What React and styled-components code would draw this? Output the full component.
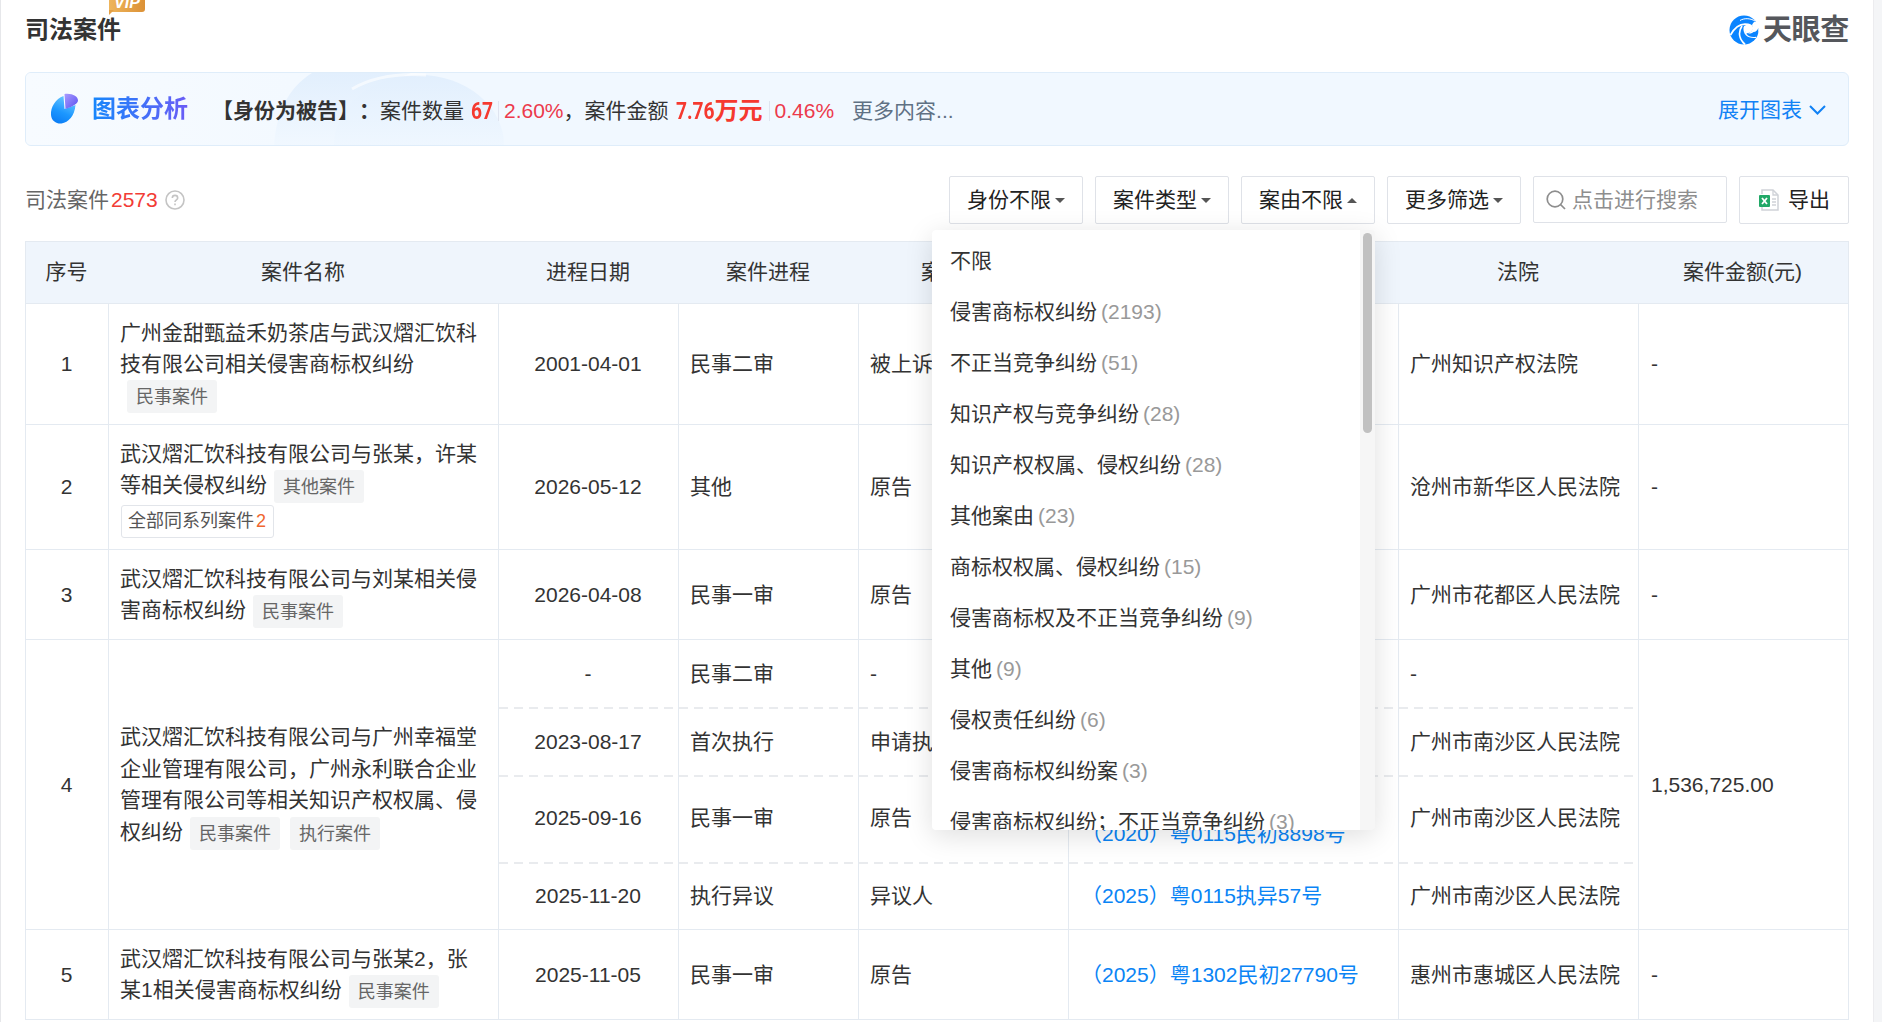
import React from 'react';
import styled, { createGlobalStyle } from 'styled-components';

const GlobalStyle = createGlobalStyle`
  * {
    box-sizing: border-box;
  }
  body {
    margin: 0;
    overflow: hidden;
    background: #f4f5f7;
    color: #333;
    font-family: "Liberation Sans", "Noto Sans CJK SC", sans-serif;
    font-size: 21px;
    line-height: 1.5;
    text-spacing-trim: space-all;
  }
`;

const Page = styled.main`
  width: 1874px;
  height: 1022px;
  overflow: hidden;
  padding: 0 24px;
  background: #fff;
  border-left: 1px solid #e6e7ea;
  border-right: 1px solid #ececef;
`;

const Header = styled.header`
  display: flex;
  justify-content: space-between;
  height: 72px;
`;

const Title = styled.h2`
  position: relative;
  margin: 12px 0 0;
  font-size: 24px;
  line-height: 36px;
  font-weight: bold;
`;

const VipBadge = styled.span`
  position: absolute;
  left: 84px;
  top: -17px;
  width: 36px;
  height: 17px;
  border-radius: 3px 3px 3px 0;
  background: linear-gradient(90deg, #eeb55c, #dc9136);
  color: #fff;
  font-size: 16px;
  line-height: 16px;
  font-style: italic;
  font-weight: bold;
  text-align: center;

  &::after {
    content: '';
    position: absolute;
    left: 0;
    top: 15px;
    border-top: 5px solid #e3a046;
    border-right: 5px solid transparent;
  }
`;

const Logo = styled.div`
  display: flex;
  align-items: center;
  gap: 4px;
  height: 59px;
  color: #55575c;
  font-size: 29px;
  line-height: 36px;
  letter-spacing: -0.3px;
  font-weight: bold;
`;

const Banner = styled.section`
  position: relative;
  display: flex;
  align-items: center;
  height: 74px;
  padding: 0 22px 0 24px;
  border: 1px solid #dfedfa;
  border-radius: 6px;
  background: #f1f8ff;
  overflow: hidden;
`;

const BannerArt = styled.svg`
  position: absolute;
  left: 0;
  top: 0;
`;

const BannerName = styled.strong`
  position: relative;
  width: 96px;
  margin: 0 24px 0 13px;
  font-size: 24px;
  line-height: 36px;
  background: linear-gradient(90deg, #1687fb, #6a5cf6);
  background-clip: text;
  color: transparent;
`;

const Summary = styled.div`
  position: relative;
  display: flex;
  align-items: center;
  flex: 1;
  padding-top: 3px;
  white-space: nowrap;
`;

const BigNumber = styled.b`
  display: flex;
  align-items: center;
  margin-left: 7px;
  font-size: 24px;
  line-height: 32px;
  color: #f5392f;
`;

const Digits = styled.span`
  width: ${(props) => props.$width}px;
  font-family: Roboto, sans-serif;
  transform: scaleX(0.8);
  transform-origin: left;
`;

const Percent = styled.span`
  margin-left: 6px;
  padding-left: 5px;
  line-height: 20px;
  border-left: 1px solid #dfe4f0;
  color: #ec3a4c;
`;

const MoreText = styled.span`
  margin-left: 18px;
  color: #5f7184;
`;

const Expand = styled.a`
  display: flex;
  align-items: center;
  gap: 7px;
  padding-top: 1px;
  color: #1182f5;
`;

const Toolbar = styled.div`
  display: flex;
  align-items: center;
  gap: 12px;
  height: 48px;
  margin: 30px 0 18px;
`;

const Total = styled.div`
  display: flex;
  align-items: center;
  flex: 1;
  color: #666;

  em {
    margin: 0 7px 0 2px;
    font-style: normal;
    color: #f23c35;
  }
`;

const FilterWrap = styled.div`
  position: relative;
`;

const Button = styled.button`
  display: flex;
  align-items: center;
  gap: ${(props) => props.$gap || 4}px;
  width: ${(props) => props.$width || 134}px;
  height: 48px;
  padding: 0 0 0 ${(props) => props.$pad || 17}px;
  border: 1px solid #dfe2e8;
  border-radius: 2px;
  background: #fff;
  font: inherit;
  color: #222;
`;

const Caret = styled.i`
  border: 5px solid transparent;
  border-width: ${(props) => (props.$up ? '0 5px 5px' : '5px 5px 0')};
  border-top-color: ${(props) => (props.$up ? 'transparent' : '#555')};
  border-bottom-color: ${(props) => (props.$up ? '#555' : 'transparent')};
`;

const Search = styled.div`
  display: flex;
  align-items: center;
  align-self: flex-start;
  gap: 6px;
  width: 194px;
  height: 47px;
  padding-left: 12px;
  border: 1px solid #dfe2e8;
  border-radius: 2px;
  color: #8e8e8e;
`;

const Dropdown = styled.div`
  position: absolute;
  z-index: 2;
  right: 0;
  top: 54px;
  display: flex;
  width: 443px;
  height: 600px;
  border-radius: 4px;
  background: #f6f6f6;
  box-shadow: 0 6px 28px rgba(0, 0, 0, 0.13);
  overflow: hidden;
`;

const Options = styled.ul`
  flex: 1;
  height: 600px;
  margin: 0;
  padding: 5px 18px;
  overflow: hidden;
  background: #fff;
  list-style: none;
`;

const Option = styled.li`
  height: 51px;
  line-height: 51px;
  white-space: nowrap;

  span {
    margin-left: 4px;
    color: #999;
  }
`;

const Scrollbar = styled.div`
  width: 15px;
  padding: 3px 3px;

  &::before {
    content: '';
    display: block;
    height: 200px;
    border-radius: 5px;
    background: #c1c1c1;
  }
`;

const Table = styled.table`
  width: 1824px;
  margin-top: -1px;
  table-layout: fixed;
  border-collapse: separate;
  border-spacing: 0;
  border: solid #e4eaf1;
  border-width: 1px 0 0 1px;
`;

const Th = styled.th`
  height: 62px;
  padding: 0 2px 1px 0;
  background: #eff5fc;
  border-bottom: 1px solid #e4eaf1;
  font-weight: normal;

  &:last-child {
    border-right: 1px solid #e4eaf1;
  }
`;

const Td = styled.td`
  height: ${(props) => props.$height}px;
  padding: ${(props) => (props.$wrap ? 2 : 0)}px 12px ${(props) => props.$lift || 0}px ${(props) => props.$left || 11}px;
  border-right: 1px solid #e4eaf1;
  border-bottom: ${(props) => (props.$dashed ? 'none' : '1px solid #e4eaf1')};
  text-align: ${(props) => (props.$center ? 'center' : 'left')};
  white-space: ${(props) => (props.$wrap ? 'normal' : 'nowrap')};
  color: ${(props) => (props.$link ? '#0a84f5' : '#333')};
  background: ${(props) =>
    props.$dashed
      ? 'repeating-linear-gradient(90deg, #e9ebee 0 9px, transparent 9px 15px) 0 100% / 100% 2px no-repeat'
      : 'none'};
`;

const Tag = styled.span`
  display: inline-block;
  height: 33px;
  margin: 0 3px 0 7px;
  padding: 0 9px;
  border-radius: 3px;
  background: #f3f4f5;
  color: #666;
  font-size: 18px;
  line-height: 34px;
  vertical-align: middle;
`;

const Series = styled.div`
  width: 153px;
  height: 33px;
  margin: 2px 0 0 1px;
  padding-left: 6px;
  border: 1px solid #e2e5ea;
  border-radius: 3px;
  color: #555;
  font-size: 18px;
  line-height: 30px;

  span {
    margin-left: 2px;
    color: #f0672f;
  }
`;

// the third step of case 4 has two case numbers, the first is under the menu
const NumberLine = styled.div`
  padding-top: ${(props) => (props.$second ? 32 : 0)}px;
`;

const columns = [
  ['序号', 83],
  ['案件名称', 390],
  ['进程日期', 180],
  ['案件进程', 180],
  ['案件身份', 210],
  ['案号', 330],
  ['法院', 240],
  ['案件金额(元)', 210],
];

const options = [
  ['不限'],
  ['侵害商标权纠纷', 2193],
  ['不正当竞争纠纷', 51],
  ['知识产权与竞争纠纷', 28],
  ['知识产权权属、侵权纠纷', 28],
  ['其他案由', 23],
  ['商标权权属、侵权纠纷', 15],
  ['侵害商标权及不正当竞争纠纷', 9],
  ['其他', 9],
  ['侵权责任纠纷', 6],
  ['侵害商标权纠纷案', 3],
  ['侵害商标权纠纷；不正当竞争纠纷', 3],
];

// steps: [height, lift, date, stage, role, case number, court]
const cases = [
  {
    name: '广州金甜甄益禾奶茶店与武汉熠汇饮科技有限公司相关侵害商标权纠纷',
    tags: ['民事案件'],
    amount: '-',
    steps: [[121, 0, '2001-04-01', '民事二审', '被上诉人', '', '广州知识产权法院']],
  },
  {
    name: '武汉熠汇饮科技有限公司与张某，许某等相关侵权纠纷',
    tags: ['其他案件'],
    series: 2,
    amount: '-',
    steps: [[125, 0, '2026-05-12', '其他', '原告', '', '沧州市新华区人民法院']],
  },
  {
    name: '武汉熠汇饮科技有限公司与刘某相关侵害商标权纠纷',
    tags: ['民事案件'],
    amount: '-',
    steps: [[90, 0, '2026-04-08', '民事一审', '原告', '', '广州市花都区人民法院']],
  },
  {
    name: '武汉熠汇饮科技有限公司与广州幸福堂企业管理有限公司，广州永利联合企业管理有限公司等相关知识产权权属、侵权纠纷',
    tags: ['民事案件', '执行案件'],
    amount: '1,536,725.00',
    steps: [
      [69, 1, '-', '民事二审', '-', '', '-'],
      [68, 3, '2023-08-17', '首次执行', '申请执行人', '', '广州市南沙区人民法院'],
      [87, 5, '2025-09-16', '民事一审', '原告', '（2020）粤0115民初8898号', '广州市南沙区人民法院'],
      [66, 1, '2025-11-20', '执行异议', '异议人', '（2025）粤0115执异57号', '广州市南沙区人民法院'],
    ],
  },
  {
    name: '武汉熠汇饮科技有限公司与张某2，张某1相关侵害商标权纠纷',
    tags: ['民事案件'],
    amount: '-',
    steps: [[90, 0, '2025-11-05', '民事一审', '原告', '（2025）粤1302民初27790号', '惠州市惠城区人民法院']],
  },
];

const LogoMark = () => (
  <svg width="30" height="30" viewBox="0 0 30 30" fill="none">
    <circle cx="15" cy="15" r="14.5" fill="#0a84ff" />
    <path d="M1.500 20C6 12 12 8 19 9.500C24 10.500 24 14 22 15.500" stroke="#fff" strokeWidth="1.800" />
    <path d="M13 11C9 17 10 24 16 29.500" stroke="#fff" strokeWidth="1.800" />
    <path d="M15.500 12C14.500 18 18 23 27 22" stroke="#fff" strokeWidth="1.800" />
    <path d="M15 11C20 8 24 11 23 15C22 18 18 18.500 17 18C15.500 16 15 13 15 11Z" fill="#fff" />
    <path d="M23 10C25 5 29 6 30 9V16C28 18 24 19 19 18.500C23 17 24.500 14 23 10Z" fill="#fff" />
    <path d="M24.500 17C27 17 28.500 15 29.300 13C29.500 17 28.500 20 26.500 22C22 22.500 19 21 17.500 19C20 19.500 23 18.500 24.500 17Z" fill="#0a84ff" />
    <path d="M11 5.500C15 3 21 3 26 6" stroke="#fff" strokeWidth="1" />
  </svg>
);

const PieSvg = styled.svg`
  position: relative;
`;

const PieIcon = () => (
  <PieSvg width="29" height="32" viewBox="0 0 28 32">
    <defs>
      <linearGradient id="pieBlue" x1="0.7" y1="0" x2="0.3" y2="1">
        <stop offset="0" stopColor="#6fcbff" />
        <stop offset="0.6" stopColor="#1c97ff" />
        <stop offset="1" stopColor="#0b7df5" />
      </linearGradient>
      <linearGradient id="piePurple" x1="0" y1="0" x2="1" y2="1">
        <stop offset="0" stopColor="#a99bff" />
        <stop offset="1" stopColor="#5a50f0" />
      </linearGradient>
    </defs>
    <path d="M13 3C5 6 0 14 0.500 22C1 28 6 31 11 30.500C18 29.500 24 23 25 12L14 16Z" fill="url(#pieBlue)" />
    <path d="M14 1C21 0 28 3 27.500 8C26 12 20 14 15 16Z" fill="url(#piePurple)" />
  </PieSvg>
);

const ExcelIcon = () => (
  <svg width="20" height="22" viewBox="0 0 20 22" fill="none">
    <path d="M3 5V1H14L19 6V21H3V18" stroke="#cfd2d8" strokeWidth="1.500" />
    <path d="M14 1V6H19M13 10H17M13 13H17M13 16H17" stroke="#cfd2d8" strokeWidth="1.300" />
    <rect y="6" width="11" height="12" rx="1" fill="#21a867" />
    <path d="M3 9L8 15M8 9L3 15" stroke="#fff" strokeWidth="1.800" />
  </svg>
);

const CaseName = ({ item }) => (
  <>
    {item.name}
    {item.tags.map((tag) => (
      <Tag key={tag}>{tag}</Tag>
    ))}
    {item.series && (
      <Series>
        全部同系列案件<span>{item.series}</span>
      </Series>
    )}
  </>
);

const CaseRows = ({ item, index }) => {
  const span = item.steps.length;
  return item.steps.map(([height, lift, date, stage, role, number, court], i) => {
    const cell = { $dashed: i < span - 1, $lift: lift };
    return (
      <tr key={i}>
        {i === 0 && <Td rowSpan={span} $center>{index + 1}</Td>}
        {i === 0 && <Td rowSpan={span} $wrap><CaseName item={item} /></Td>}
        <Td {...cell} $height={height} $center>{date}</Td>
        <Td {...cell}>{stage}</Td>
        <Td {...cell}>{role}</Td>
        <Td {...cell} $link $left={12}>
          <NumberLine $second={height === 87}>{number}</NumberLine>
        </Td>
        <Td {...cell}>{court}</Td>
        {i === 0 && <Td rowSpan={span} $left={12}>{item.amount}</Td>}
      </tr>
    );
  });
};

export default function App() {
  return (
    <>
      <GlobalStyle />
      <Page>
        <Header>
          <Title>
            司法案件
            <VipBadge>VIP</VipBadge>
          </Title>
          <Logo>
            <LogoMark />
            天眼查
          </Logo>
        </Header>

        <Banner>
          <BannerArt width="560" height="74" viewBox="0 0 560 74">
            <defs>
              <linearGradient id="glow" x1="0" y1="0" x2="1" y2="0">
                <stop offset="0" stopColor="#f7fbff" />
                <stop offset="1" stopColor="#f1f8ff" />
              </linearGradient>
              <linearGradient id="arc" x1="0" y1="0" x2="0" y2="1">
                <stop offset="0" stopColor="#e2effd" />
                <stop offset="1" stopColor="#f1f8ff" />
              </linearGradient>
              <linearGradient id="disc" gradientUnits="userSpaceOnUse" x1="0" y1="2" x2="0" y2="74">
                <stop offset="0" stopColor="#e2effd" />
                <stop offset="1" stopColor="#eff7ff" />
              </linearGradient>
            </defs>
            <rect width="400" height="74" fill="url(#glow)" />
            <path d="M286 0H385C360 8 345 30 340 74H248C250 40 262 15 286 0Z" fill="url(#arc)" />
            <ellipse cx="393" cy="72" rx="85" ry="70" fill="url(#disc)" />
            <path d="M326 16C345 5 370 0 400 2" stroke="#fff" strokeWidth="3" fill="none" opacity="0.6" />
          </BannerArt>
          <PieIcon />
          <BannerName>图表分析</BannerName>
          <Summary>
            <b>【身份为被告】：</b>
            案件数量
            <BigNumber><Digits $width={21}>67</Digits></BigNumber>
            <Percent>2.60%</Percent>
            ，案件金额
            <BigNumber><Digits $width={39}>7.76</Digits>万元</BigNumber>
            <Percent>0.46%</Percent>
            <MoreText>更多内容...</MoreText>
          </Summary>
          <Expand>
            展开图表
            <svg width="17" height="10" viewBox="0 0 17 10" fill="none" stroke="#1182f5" strokeWidth="2">
              <path d="M1 1L8.500 8.500L16 1" />
            </svg>
          </Expand>
        </Banner>

        <Toolbar>
          <Total>
            司法案件<em>2573</em>
            <svg width="20" height="20" viewBox="0 0 20 20" fill="none" stroke="#c4c4c4" strokeWidth="1.600">
              <circle cx="10" cy="10" r="9" />
              <path d="M7.300 8C7.300 4.500 12.700 4.500 12.700 8C12.700 9.800 10 9.800 10 12M10 13.400V15.200" />
            </svg>
          </Total>
          <Button>身份不限<Caret /></Button>
          <Button>案件类型<Caret /></Button>
          <FilterWrap>
            <Button>案由不限<Caret $up /></Button>
            <Dropdown>
              <Options>
                {options.map(([label, count]) => (
                  <Option key={label}>
                    {label}
                    {count && <span>({count})</span>}
                  </Option>
                ))}
              </Options>
              <Scrollbar />
            </Dropdown>
          </FilterWrap>
          <Button>更多筛选<Caret /></Button>
          <Search>
            <svg width="20" height="20" viewBox="0 0 20 20" fill="none" stroke="#8e8e8e" strokeWidth="1.700">
              <circle cx="9" cy="9" r="7.800" />
              <path d="M14.500 14.500L19 19" />
            </svg>
            点击进行搜索
          </Search>
          <Button $width={110} $gap={9} $pad={19}>
            <ExcelIcon />
            导出
          </Button>
        </Toolbar>

        <Table>
          <colgroup>
            {columns.map(([label, width]) => (
              <col key={label} width={width} />
            ))}
          </colgroup>
          <thead>
            <tr>
              {columns.map(([label]) => (
                <Th key={label}>{label}</Th>
              ))}
            </tr>
          </thead>
          <tbody>
            {cases.map((item, index) => (
              <CaseRows key={item.name} item={item} index={index} />
            ))}
          </tbody>
        </Table>
      </Page>
    </>
  );
}
